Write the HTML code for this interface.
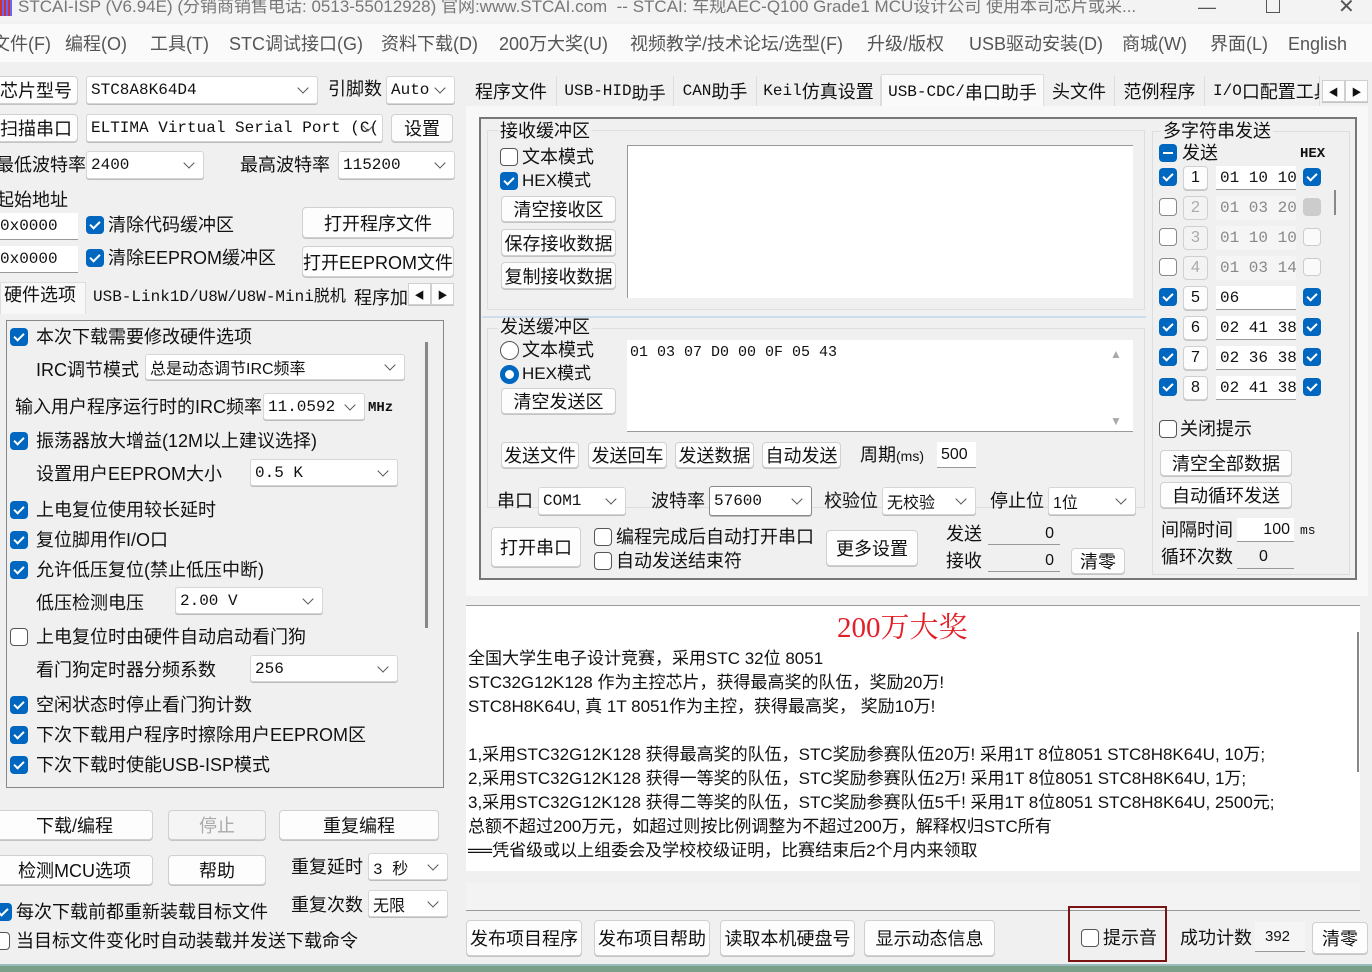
<!DOCTYPE html>
<html><head><meta charset="utf-8"><style>
*{box-sizing:border-box;margin:0;padding:0}
body{width:1372px;height:972px;overflow:hidden;background:#f0f0f0;font-family:"Liberation Sans","Noto Sans CJK SC",sans-serif;color:#111;position:relative;font-size:18px}
.a{position:absolute;white-space:nowrap;line-height:1}
.btn{position:absolute;background:#fdfdfd;border:1px solid #d0d0d0;border-radius:4px;box-shadow:0 1px 0 #c4c4c4;display:flex;align-items:center;justify-content:center;white-space:nowrap;font-size:18px}
.cb{position:absolute;width:18px;height:18px;border-radius:4px;background:#0067c0}
.cb::after{content:"";position:absolute;left:6px;top:3px;width:4px;height:8px;border:solid #fff;border-width:0 2px 2px 0;transform:rotate(45deg)}
.cu{position:absolute;width:18px;height:18px;border-radius:4px;border:1px solid #555;background:#fff}
.cg{position:absolute;width:18px;height:18px;border-radius:4px;border:1px solid #ccc;background:#fafafa}
.co{position:absolute;background:#fff;border:1px solid #d6d6d6;border-radius:3px;box-shadow:0 1px 0 #bbb;font-size:16px;font-family:"Liberation Mono","Noto Sans CJK SC",monospace;display:flex;align-items:center;padding-left:4px;white-space:nowrap;overflow:hidden}
.co::after{content:"";position:absolute;right:10px;top:50%;margin-top:-6px;width:7px;height:7px;border:solid #555;border-width:0 1px 1px 0;transform:rotate(45deg)}
.in{position:absolute;background:#fff;border-bottom:1px solid #999;font-size:16px;display:flex;align-items:center;white-space:nowrap;overflow:hidden}
.tab{position:absolute;top:76px;height:30px;display:flex;align-items:center;justify-content:center;font-size:18px;border-right:1px solid #ddd;white-space:nowrap}
.m{font-family:"Liberation Mono","Noto Sans CJK SC",monospace;font-size:16px}
.txt div{position:absolute;left:468px;font-size:17px;white-space:nowrap;line-height:1}
</style></head><body>
<!-- title -->
<div class="a" style="left:0;top:0;width:1372px;height:22px;background:#f3f3f3"></div>
<div class="a" style="left:0;top:-2px;width:12px;height:18px;background:repeating-linear-gradient(90deg,#c33 0 2px,#66f 2px 4px)"></div>
<div class="a" style="left:18px;top:-2px;font-size:17px;color:#777">STCAI-ISP (V6.94E) (分销商销售电话: 0513-55012928) 官网:www.STCAI.com &nbsp;-- STCAI: 车规AEC-Q100 Grade1 MCU设计公司 使用本司芯片或采...</div>
<div class="a" style="left:1198px;top:-2px;font-size:18px;color:#555">—</div>
<div class="a" style="left:1266px;top:0px;width:14px;height:13px;border:1px solid #555;border-top:none"></div>
<div class="a" style="left:1338px;top:-3px;font-size:20px;color:#555">✕</div>
<!-- menu -->
<div class="a" style="left:0;top:24px;width:1372px;height:38px;background:#fafafa"></div>
<div class="a" style="top:35px;font-size:18px;color:#555;left:-8px">文件(F)</div>
<div class="a" style="top:35px;font-size:18px;color:#555;left:65px">编程(O)</div>
<div class="a" style="top:35px;font-size:18px;color:#555;left:150px">工具(T)</div>
<div class="a" style="top:35px;font-size:18px;color:#555;left:229px">STC调试接口(G)</div>
<div class="a" style="top:35px;font-size:18px;color:#555;left:381px">资料下载(D)</div>
<div class="a" style="top:35px;font-size:18px;color:#555;left:499px">200万大奖(U)</div>
<div class="a" style="top:35px;font-size:18px;color:#555;left:630px">视频教学/技术论坛/选型(F)</div>
<div class="a" style="top:35px;font-size:18px;color:#555;left:867px">升级/版权</div>
<div class="a" style="top:35px;font-size:18px;color:#555;left:969px">USB驱动安装(D)</div>
<div class="a" style="top:35px;font-size:18px;color:#555;left:1122px">商城(W)</div>
<div class="a" style="top:35px;font-size:18px;color:#555;left:1210px">界面(L)</div>
<div class="a" style="top:35px;font-size:18px;color:#555;left:1288px">English</div>

<!-- LEFT -->
<div class="btn" style="left:-6px;top:76px;width:84px;height:28px">芯片型号</div>
<div class="co" style="left:86px;top:76px;width:232px;height:28px">STC8A8K64D4</div>
<div class="a" style="left:328px;top:80px">引脚数</div>
<div class="co" style="left:386px;top:76px;width:69px;height:28px">Auto</div>
<div class="btn" style="left:-6px;top:114px;width:84px;height:28px">扫描串口</div>
<div class="co" style="left:86px;top:114px;width:297px;height:28px">ELTIMA Virtual Serial Port (C(</div>
<div class="btn" style="left:391px;top:114px;width:62px;height:28px">设置</div>
<div class="a" style="left:-4px;top:156px">最低波特率</div>
<div class="co" style="left:86px;top:151px;width:118px;height:28px">2400</div>
<div class="a" style="left:240px;top:156px">最高波特率</div>
<div class="co" style="left:338px;top:151px;width:117px;height:28px">115200</div>
<div class="a" style="left:-4px;top:191px">起始地址</div>
<div class="in m" style="left:0;top:213px;width:78px;height:27px;padding-left:0">0x0000</div>
<div class="cb" style="left:86px;top:216px"></div><div class="a" style="left:108px;top:216px">清除代码缓冲区</div>
<div class="btn" style="left:302px;top:207px;width:152px;height:31px">打开程序文件</div>
<div class="in m" style="left:0;top:246px;width:78px;height:27px">0x0000</div>
<div class="cb" style="left:86px;top:249px"></div><div class="a" style="left:108px;top:249px">清除EEPROM缓冲区</div>
<div class="btn" style="left:302px;top:246px;width:152px;height:31px">打开EEPROM文件</div>
<!-- left tabs -->
<div class="a" style="left:0;top:282px;width:86px;height:32px;background:#f8f8f8;border:1px solid #ddd;border-bottom:none"></div>
<div class="a" style="left:4px;top:286px">硬件选项</div>
<div class="a" style="left:93px;top:289px;font-size:16px" ><span class="m">USB-Link1D/U8W/U8W-Mini</span>脱机</div>
<div class="a" style="left:354px;top:289px">程序加</div>
<div class="btn" style="left:408px;top:283px;width:23px;height:22px;font-size:10px;border-radius:0">◀</div>
<div class="btn" style="left:431px;top:283px;width:23px;height:22px;font-size:10px;border-radius:0">▶</div>
<div class="a" style="left:6px;top:320px;width:438px;height:468px;border:1px solid #888;background:#f0f0f0"></div>
<div class="a" style="left:425px;top:342px;width:3px;height:286px;background:#888"></div>
<div class="cb" style="left:10px;top:328px"></div><div class="a" style="left:36px;top:328px">本次下载需要修改硬件选项</div>
<div class="a" style="left:36px;top:361px">IRC调节模式</div>
<div class="co" style="left:145px;top:354px;width:260px;height:26px;font-family:'Liberation Sans','Noto Sans CJK SC'">总是动态调节IRC频率</div>
<div class="a" style="left:15px;top:398px">输入用户程序运行时的IRC频率</div>
<div class="co" style="left:263px;top:393px;width:102px;height:27px">11.0592</div>
<div class="a m" style="left:368px;top:401px;font-size:14px;font-weight:bold">MHz</div>
<div class="cb" style="left:10px;top:432px"></div><div class="a" style="left:36px;top:432px">振荡器放大增益(12M以上建议选择)</div>
<div class="a" style="left:36px;top:465px">设置用户EEPROM大小</div>
<div class="co" style="left:250px;top:459px;width:148px;height:27px">0.5 K</div>
<div class="cb" style="left:10px;top:501px"></div><div class="a" style="left:36px;top:501px">上电复位使用较长延时</div>
<div class="cb" style="left:10px;top:531px"></div><div class="a" style="left:36px;top:531px">复位脚用作I/O口</div>
<div class="cb" style="left:10px;top:561px"></div><div class="a" style="left:36px;top:561px">允许低压复位(禁止低压中断)</div>
<div class="a" style="left:36px;top:594px">低压检测电压</div>
<div class="co" style="left:175px;top:587px;width:148px;height:27px">2.00 V</div>
<div class="cu" style="left:10px;top:628px"></div><div class="a" style="left:36px;top:628px">上电复位时由硬件自动启动看门狗</div>
<div class="a" style="left:36px;top:661px">看门狗定时器分频系数</div>
<div class="co" style="left:250px;top:655px;width:148px;height:27px">256</div>
<div class="cb" style="left:10px;top:696px"></div><div class="a" style="left:36px;top:696px">空闲状态时停止看门狗计数</div>
<div class="cb" style="left:10px;top:726px"></div><div class="a" style="left:36px;top:726px">下次下载用户程序时擦除用户EEPROM区</div>
<div class="cb" style="left:10px;top:756px"></div><div class="a" style="left:36px;top:756px">下次下载时使能USB-ISP模式</div>
<div class="btn" style="left:-4px;top:810px;width:157px;height:30px">下载/编程</div>
<div class="btn" style="left:168px;top:810px;width:98px;height:30px;color:#aaa;background:#f5f5f5">停止</div>
<div class="btn" style="left:279px;top:810px;width:160px;height:30px">重复编程</div>
<div class="btn" style="left:-4px;top:855px;width:157px;height:30px">检测MCU选项</div>
<div class="btn" style="left:168px;top:855px;width:98px;height:30px">帮助</div>
<div class="a" style="left:291px;top:858px">重复延时</div>
<div class="co" style="left:368px;top:853px;width:80px;height:27px">3 秒</div>
<div class="a" style="left:291px;top:896px">重复次数</div>
<div class="co" style="left:368px;top:890px;width:80px;height:27px;font-family:'Liberation Sans','Noto Sans CJK SC'">无限</div>
<div class="cb" style="left:-6px;top:903px"></div><div class="a" style="left:16px;top:903px">每次下载前都重新装载目标文件</div>
<div class="cu" style="left:-8px;top:932px"></div><div class="a" style="left:16px;top:932px">当目标文件变化时自动装载并发送下载命令</div>

<!-- RIGHT tabs -->
<div class="a" style="left:466px;top:106px;width:902px;height:1px;background:#ddd"></div>
<div class="tab" style="left:466px;width:91px">程序文件</div>
<div class="tab" style="left:557px;width:117px;font-size:17px"><span class="m">USB-HID</span>助手</div>
<div class="tab" style="left:674px;width:83px"><span class="m">CAN</span>助手</div>
<div class="tab" style="left:757px;width:124px"><span class="m">Keil</span>仿真设置</div>
<div class="tab" style="left:881px;width:163px;top:74px;height:34px;background:#fafafa;border:1px solid #ddd;border-bottom:none"><span class="m">USB-CDC/</span>串口助手</div>
<div class="tab" style="left:1044px;width:71px">头文件</div>
<div class="tab" style="left:1115px;width:90px">范例程序</div>
<div class="tab" style="left:1205px;width:115px;justify-content:flex-start;padding-left:8px;overflow:hidden"><span class="m">I/O</span>口配置工具</div>
<div class="btn" style="left:1322px;top:80px;width:23px;height:22px;font-size:10px;border-radius:0">◀</div>
<div class="btn" style="left:1345px;top:80px;width:23px;height:22px;font-size:10px;border-radius:0">▶</div>
<div class="a" style="left:466px;top:106px;width:902px;height:490px;background:#f8f8f8"></div>
<div class="a" style="left:479px;top:117px;width:878px;height:463px;border:2px solid #777;background:#f0f0f0"></div>
<!-- receive -->
<div class="a" style="left:487px;top:130px;width:658px;height:180px;border:1px solid #ddd"></div>
<div class="a" style="left:498px;top:122px;background:#f0f0f0;padding:0 2px">接收缓冲区</div>
<div class="cu" style="left:500px;top:148px"></div><div class="a" style="left:522px;top:148px">文本模式</div>
<div class="cb" style="left:500px;top:172px"></div><div class="a" style="left:522px;top:172px;font-size:17px">HEX模式</div>
<div class="btn" style="left:501px;top:196px;width:115px;height:26px">清空接收区</div>
<div class="btn" style="left:501px;top:229px;width:115px;height:27px">保存接收数据</div>
<div class="btn" style="left:501px;top:262px;width:115px;height:27px">复制接收数据</div>
<div class="a" style="left:627px;top:145px;width:506px;height:153px;background:#fff;border-top:1px solid #999;border-left:1px solid #999"></div>
<div class="a" style="left:482px;top:316px;width:664px;height:2px;background:#cde"></div>
<!-- send -->
<div class="a" style="left:487px;top:328px;width:658px;height:180px;border:1px solid #ddd"></div>
<div class="a" style="left:498px;top:318px;background:#f0f0f0;padding:0 2px">发送缓冲区</div>
<div class="a" style="left:500px;top:341px;width:19px;height:19px;border:1px solid #555;border-radius:50%;background:#fff"></div><div class="a" style="left:522px;top:341px">文本模式</div>
<div class="a" style="left:500px;top:365px;width:19px;height:19px;border:5px solid #0067c0;border-radius:50%;background:#fff"></div><div class="a" style="left:522px;top:365px;font-size:17px">HEX模式</div>
<div class="btn" style="left:501px;top:388px;width:115px;height:26px">清空发送区</div>
<div class="a" style="left:627px;top:340px;width:506px;height:92px;background:#fff;border-bottom:1px solid #999"></div>
<div class="a m" style="left:630px;top:345px;font-size:15px">01 03 07 D0 00 0F 05 43</div>
<div class="a" style="left:1110px;top:348px;font-size:12px;color:#aaa">▲</div>
<div class="a" style="left:1110px;top:415px;font-size:12px;color:#aaa">▼</div>
<div class="btn" style="left:501px;top:442px;width:78px;height:26px">发送文件</div>
<div class="btn" style="left:588px;top:442px;width:79px;height:26px">发送回车</div>
<div class="btn" style="left:675px;top:442px;width:79px;height:26px">发送数据</div>
<div class="btn" style="left:762px;top:442px;width:79px;height:26px">自动发送</div>
<div class="a" style="left:860px;top:446px">周期<span style="font-size:14px">(ms)</span></div>
<div class="in" style="left:937px;top:442px;width:39px;height:26px;padding-left:4px">500</div>
<div class="a" style="left:497px;top:492px">串口</div>
<div class="co" style="left:538px;top:487px;width:88px;height:28px">COM1</div>
<div class="a" style="left:651px;top:492px">波特率</div>
<div class="co" style="left:709px;top:486px;width:103px;height:30px;border-color:#888">57600</div>
<div class="a" style="left:824px;top:492px">校验位</div>
<div class="co" style="left:882px;top:487px;width:94px;height:28px;font-family:'Liberation Sans','Noto Sans CJK SC'">无校验</div>
<div class="a" style="left:990px;top:492px">停止位</div>
<div class="co" style="left:1048px;top:487px;width:88px;height:28px;font-family:'Liberation Sans','Noto Sans CJK SC'">1位</div>
<div class="btn" style="left:491px;top:527px;width:90px;height:40px">打开串口</div>
<div class="cu" style="left:594px;top:528px"></div><div class="a" style="left:616px;top:528px">编程完成后自动打开串口</div>
<div class="cu" style="left:594px;top:552px"></div><div class="a" style="left:616px;top:552px">自动发送结束符</div>
<div class="btn" style="left:826px;top:530px;width:92px;height:36px">更多设置</div>
<div class="a" style="left:946px;top:525px">发送</div>
<div class="in" style="left:988px;top:523px;width:72px;height:22px;justify-content:flex-end;padding-right:6px;background:#f0f0f0">0</div>
<div class="a" style="left:946px;top:552px">接收</div>
<div class="in" style="left:988px;top:550px;width:72px;height:22px;justify-content:flex-end;padding-right:6px;background:#f0f0f0">0</div>
<div class="btn" style="left:1071px;top:548px;width:54px;height:26px">清零</div>
<!-- multi send -->
<div class="a" style="left:1152px;top:131px;width:198px;height:444px;border:1px solid #ddd"></div>
<div class="a" style="left:1161px;top:122px;background:#f0f0f0;padding:0 2px">多字符串发送</div>
<div class="a" style="left:1159px;top:144px;width:18px;height:18px;border-radius:4px;background:#0067c0"><div style="position:absolute;left:4px;top:8px;width:10px;height:2px;background:#fff"></div></div>
<div class="a" style="left:1182px;top:144px">发送</div>
<div class="a m" style="left:1300px;top:147px;font-size:14px;font-weight:bold">HEX</div>
<div class="a" style="left:1334px;top:190px;width:2px;height:25px;background:#888"></div>
<div class="cb" style="left:1159px;top:168px"></div><div class="btn" style="left:1183px;top:166px;width:25px;height:24px;font-size:16px">1</div><div class="in m" style="left:1216px;top:166px;width:80px;height:24px;padding-left:4px">01 10 10(</div><div class="cb" style="left:1303px;top:168px"></div>
<div class="cu" style="left:1159px;top:198px;border-color:#888"></div><div class="btn" style="left:1183px;top:196px;width:25px;height:24px;font-size:16px;color:#aaa;background:#f3f3f3;box-shadow:none">2</div><div class="in m" style="left:1216px;top:196px;width:80px;height:24px;padding-left:4px;color:#888;background:#f5f5f5;border:none">01 03 20</div><div class="a" style="left:1303px;top:198px;width:18px;height:18px;border-radius:4px;background:#ccc"></div>
<div class="cu" style="left:1159px;top:228px;border-color:#888"></div><div class="btn" style="left:1183px;top:226px;width:25px;height:24px;font-size:16px;color:#aaa;background:#f3f3f3;box-shadow:none">3</div><div class="in m" style="left:1216px;top:226px;width:80px;height:24px;padding-left:4px;color:#888;background:#f5f5f5;border:none">01 10 10(</div><div class="cg" style="left:1303px;top:228px"></div>
<div class="cu" style="left:1159px;top:258px;border-color:#888"></div><div class="btn" style="left:1183px;top:256px;width:25px;height:24px;font-size:16px;color:#aaa;background:#f3f3f3;box-shadow:none">4</div><div class="in m" style="left:1216px;top:256px;width:80px;height:24px;padding-left:4px;color:#888;background:#f5f5f5;border:none">01 03 14</div><div class="cg" style="left:1303px;top:258px"></div>
<div class="cb" style="left:1159px;top:288px"></div><div class="btn" style="left:1183px;top:286px;width:25px;height:24px;font-size:16px">5</div><div class="in m" style="left:1216px;top:286px;width:80px;height:24px;padding-left:4px">06</div><div class="cb" style="left:1303px;top:288px"></div>
<div class="cb" style="left:1159px;top:318px"></div><div class="btn" style="left:1183px;top:316px;width:25px;height:24px;font-size:16px">6</div><div class="in m" style="left:1216px;top:316px;width:80px;height:24px;padding-left:4px">02 41 38</div><div class="cb" style="left:1303px;top:318px"></div>
<div class="cb" style="left:1159px;top:348px"></div><div class="btn" style="left:1183px;top:346px;width:25px;height:24px;font-size:16px">7</div><div class="in m" style="left:1216px;top:346px;width:80px;height:24px;padding-left:4px">02 36 38</div><div class="cb" style="left:1303px;top:348px"></div>
<div class="cb" style="left:1159px;top:378px"></div><div class="btn" style="left:1183px;top:376px;width:25px;height:24px;font-size:16px">8</div><div class="in m" style="left:1216px;top:376px;width:80px;height:24px;padding-left:4px">02 41 38</div><div class="cb" style="left:1303px;top:378px"></div>
<div class="cu" style="left:1159px;top:420px"></div><div class="a" style="left:1180px;top:420px">关闭提示</div>
<div class="btn" style="left:1160px;top:450px;width:132px;height:26px">清空全部数据</div>
<div class="btn" style="left:1160px;top:482px;width:132px;height:26px">自动循环发送</div>
<div class="a" style="left:1161px;top:521px">间隔时间</div>
<div class="in" style="left:1237px;top:518px;width:57px;height:24px;justify-content:flex-end;padding-right:4px">100</div>
<div class="a m" style="left:1300px;top:524px;font-size:13px">ms</div>
<div class="a" style="left:1161px;top:548px">循环次数</div>
<div class="in" style="left:1237px;top:545px;width:57px;height:24px;padding-left:22px;background:#f0f0f0">0</div>

<!-- info text -->
<div class="a" style="left:466px;top:605px;width:894px;height:266px;background:#fff;border-top:1px solid #999"></div>
<div class="a" style="left:1357px;top:632px;width:2px;height:140px;background:#888"></div>
<div class="a" style="left:837px;top:614px;font-size:29px;color:#e3202a;font-family:'Liberation Serif','Noto Serif CJK SC',serif">200万大奖</div>
<div class="txt">
<div style="top:650px">全国大学生电子设计竞赛，采用STC 32位 8051</div>
<div style="top:674px">STC32G12K128 作为主控芯片，获得最高奖的队伍，奖励20万!</div>
<div style="top:698px">STC8H8K64U, 真 1T 8051作为主控，获得最高奖， 奖励10万!</div>
<div style="top:746px">1,采用STC32G12K128 获得最高奖的队伍，STC奖励参赛队伍20万! 采用1T 8位8051 STC8H8K64U, 10万;</div>
<div style="top:770px">2,采用STC32G12K128 获得一等奖的队伍，STC奖励参赛队伍2万!  采用1T 8位8051 STC8H8K64U, 1万;</div>
<div style="top:794px">3,采用STC32G12K128 获得二等奖的队伍，STC奖励参赛队伍5千!  采用1T 8位8051 STC8H8K64U, 2500元;</div>
<div style="top:818px">总额不超过200万元，如超过则按比例调整为不超过200万，解释权归STC所有</div>
<div style="top:842px">══凭省级或以上组委会及学校校级证明，比赛结束后2个月内来领取</div>
</div>
<div class="a" style="left:466px;top:883px;width:894px;height:28px;background:#f3f3f3;border-bottom:1px solid #999"></div>
<div class="btn" style="left:466px;top:920px;width:116px;height:36px">发布项目程序</div>
<div class="btn" style="left:594px;top:920px;width:116px;height:36px">发布项目帮助</div>
<div class="btn" style="left:720px;top:920px;width:135px;height:36px">读取本机硬盘号</div>
<div class="btn" style="left:864px;top:920px;width:131px;height:36px">显示动态信息</div>
<div class="a" style="left:1068px;top:906px;width:99px;height:56px;border:2px solid #7a1414"></div>
<div class="cu" style="left:1081px;top:929px"></div><div class="a" style="left:1103px;top:929px">提示音</div>
<div class="a" style="left:1180px;top:929px">成功计数</div>
<div class="in" style="left:1255px;top:922px;width:50px;height:30px;padding-left:10px;background:#f5f5f5;font-size:15px">392</div>
<div class="btn" style="left:1312px;top:922px;width:56px;height:32px">清零</div>
<div class="a" style="left:0;top:964px;width:1372px;height:8px;background:#7aa08a;border-top:2px solid #9bb"></div>
</body></html>
